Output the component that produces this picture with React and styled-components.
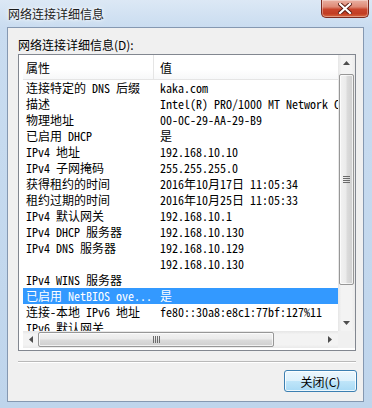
import React from 'react';
import styled, { createGlobalStyle } from 'styled-components';

const Global = createGlobalStyle`
  html, body { margin: 0; padding: 0; background: #fff; }
  body { width: 372px; height: 408px; overflow: hidden; }
`;

const MONO = `"Noto Sans Mono CJK SC", "Liberation Mono", "Noto Sans CJK SC", monospace`;
const UI = `"Noto Sans CJK SC", "Noto Sans", sans-serif`;

const Window = styled.div`
  width: 372px;
  height: 408px;
  box-sizing: border-box;
  background: linear-gradient(180deg, #dce8f5 0px, #c9dcf0 28px, #bfd5ec 100%);
  display: flex;
  flex-direction: column;
  padding: 0 8px 6px 7px;
  font-family: ${UI};
`;

const TitleBar = styled.div`
  height: 27px;
  margin: 0 -8px 0 -7px;
  padding: 0 3px 0 8px;
  display: flex;
  align-items: flex-start;
`;

const Title = styled.div`
  font-size: 12px;
  line-height: 27px;
  color: #1b1b1b;
  text-shadow: 0 0 6px #fff, 0 0 3px #fff;
`;

const CloseBtn = styled.div`
  margin-left: auto;
  width: 48px;
  height: 18px;
  box-sizing: border-box;
  border: 1px solid #7d2a1e;
  border-top: none;
  border-radius: 0 0 5px 5px;
  background: linear-gradient(180deg, #eab0a2 0%, #de8a76 40%, #c9452c 55%, #c23d23 80%, #d8673f 100%);
  box-shadow: inset 0 0 0 1px rgba(255,255,255,0.35);
  display: flex;
  align-items: center;
  justify-content: center;
`;

const Client = styled.div`
  flex: 1;
  background: #f0f0f0;
  border: 1px solid #8598b1;
  display: flex;
  flex-direction: column;
  padding: 0 7px 0 10px;
`;

const Label = styled.div`
  font-size: 12px;
  line-height: 16px;
  margin-top: 9px;
  margin-bottom: 1px;
  color: #000;
`;

const ListBox = styled.div`
  width: 338px;
  height: 297px;
  box-sizing: border-box;
  border: 1px solid #828790;
  background: #fff;
  padding: 0 0 2px 4px;
  display: grid;
  grid-template-columns: 315px 17px;
  grid-template-rows: 276px 17px;
`;

const ListArea = styled.div`
  overflow: hidden;
  font-family: ${MONO};
  font-size: 12px;
`;

const Header = styled.div`
  height: 25px;
  box-sizing: border-box;
  border-bottom: 1px solid #e5e5e5;
  display: flex;
  align-items: center;
  background: linear-gradient(180deg, #ffffff 0%, #ffffff 60%, #f7f8f9 100%);
`;

const HeadCell = styled.div`
  box-sizing: border-box;
  height: 100%;
  display: flex;
  align-items: center;
  padding-left: ${p => (p.$first ? 3 : 6)}px;
  width: ${p => (p.$first ? '131px' : 'auto')};
  border-right: ${p => (p.$first ? '1px solid #e5e5e5' : 'none')};
  color: #000;
`;

const Row = styled.div`
  height: 16px;
  display: flex;
  align-items: center;
  white-space: nowrap;
  background: ${p => (p.$sel ? '#3399ff' : 'transparent')};
  color: ${p => (p.$sel ? '#fff' : '#000')};
`;

const Cell = styled.div`
  box-sizing: border-box;
  overflow: hidden;
  white-space: nowrap;
  line-height: 16px;
  padding-left: ${p => (p.$first ? 3 : 6)}px;
  width: ${p => (p.$first ? '131px' : 'auto')};
  flex: ${p => (p.$first ? '0 0 auto' : '1 1 auto')};
`;

const VScroll = styled.div`
  grid-column: 2;
  grid-row: 1;
  background: linear-gradient(90deg, #e6e6e6 0%, #f3f3f3 20%, #f3f3f3 80%, #eaeaea 100%);
  display: flex;
  flex-direction: column;
  align-items: center;
`;

const HScroll = styled.div`
  grid-column: 1;
  grid-row: 2;
  background: linear-gradient(180deg, #e6e6e6 0%, #f3f3f3 20%, #f3f3f3 80%, #eaeaea 100%);
  display: flex;
  align-items: center;
`;

const Corner = styled.div`
  grid-column: 2;
  grid-row: 2;
  background: #f0f0f0;
`;

const ArrowBox = styled.div`
  width: ${p => (p.$h ? '16px' : '17px')};
  height: ${p => (p.$h ? '17px' : '16px')};
  flex: 0 0 auto;
  display: flex;
  align-items: center;
  justify-content: center;
`;

const VThumb = styled.div`
  margin-top: 3px;
  width: 15px;
  height: 211px;
  box-sizing: border-box;
  border: 1px solid #979797;
  border-radius: 2px;
  background: linear-gradient(90deg, #f2f2f2 0%, #ebebeb 45%, #dbdbdb 55%, #cfcfcf 100%);
  box-shadow: inset 0 0 0 1px rgba(255,255,255,0.7);
  display: flex;
  align-items: center;
  justify-content: center;
`;

const HThumb = styled.div`
  margin-left: -1px;
  width: 236px;
  height: 15px;
  box-sizing: border-box;
  border: 1px solid #979797;
  border-radius: 2px;
  background: linear-gradient(180deg, #f2f2f2 0%, #ebebeb 45%, #dbdbdb 55%, #cfcfcf 100%);
  box-shadow: inset 0 0 0 1px rgba(255,255,255,0.7);
  display: flex;
  align-items: center;
  justify-content: center;
`;

const Spacer = styled.div`
  flex: 1;
`;

const Separator = styled.div`
  width: 338px;
  margin-top: 10px;
  border-top: 1px solid #b9b9b9;
  border-bottom: 1px solid #ffffff;
`;

const ButtonRow = styled.div`
  display: flex;
  justify-content: flex-end;
  margin-top: 7px;
  width: 339px;
`;

const Button = styled.div`
  width: 73px;
  height: 22px;
  box-sizing: border-box;
  border: 1px solid #3c7fb1;
  border-radius: 3px;
  background: linear-gradient(180deg, #ecf7fd 0%, #ddf1fc 48%, #bfe5f9 52%, #a9daf5 100%);
  box-shadow: inset 0 0 0 1px rgba(255,255,255,0.8);
  display: flex;
  align-items: center;
  justify-content: center;
  font-size: 12px;
  color: #000;
`;

const rows = [
  ['连接特定的 DNS 后缀', 'kaka.com'],
  ['描述', 'Intel(R) PRO/1000 MT Network Connection'],
  ['物理地址', '00-0C-29-AA-29-B9'],
  ['已启用 DHCP', '是'],
  ['IPv4 地址', '192.168.10.10'],
  ['IPv4 子网掩码', '255.255.255.0'],
  ['获得租约的时间', '2016年10月17日 11:05:34'],
  ['租约过期的时间', '2016年10月25日 11:05:33'],
  ['IPv4 默认网关', '192.168.10.1'],
  ['IPv4 DHCP 服务器', '192.168.10.130'],
  ['IPv4 DNS 服务器', '192.168.10.129'],
  ['', '192.168.10.130'],
  ['IPv4 WINS 服务器', ''],
  ['已启用 NetBIOS ove...', '是', true],
  ['连接-本地 IPv6 地址', 'fe80::30a8:e8c1:77bf:127%11'],
  ['IPv6 默认网关', ''],
];

const Tri = ({ dir }) => {
  const pts = {
    up: '0,4 3.5,0 7,4',
    down: '0,0 3.5,4 7,0',
    left: '4,0 0,3.5 4,7',
    right: '0,0 4,3.5 0,7',
  }[dir];
  const vert = dir === 'up' || dir === 'down';
  return (
    <svg width={vert ? 7 : 4} height={vert ? 4 : 7} viewBox={vert ? '0 0 7 4' : '0 0 4 7'}>
      <polygon points={pts} fill="#4d4d4d" />
    </svg>
  );
};

const VGrip = () => (
  <svg width="7" height="7" viewBox="0 0 7 7">
    {[0.5, 2.5, 4.5, 6.5].map(y => (
      <line key={y} x1="0" x2="7" y1={y} y2={y} stroke="#6b6b6b" strokeWidth="1" />
    ))}
  </svg>
);

const HGrip = () => (
  <svg width="7" height="7" viewBox="0 0 7 7">
    {[0.5, 2.5, 4.5, 6.5].map(x => (
      <line key={x} y1="0" y2="7" x1={x} x2={x} stroke="#6b6b6b" strokeWidth="1" />
    ))}
  </svg>
);

const CloseX = () => (
  <svg width="14" height="11" viewBox="0 0 14 11">
    <path d="M2 1 L12 10 M12 1 L2 10" stroke="#5a1a10" strokeWidth="4" strokeLinecap="square" />
    <path d="M2 1 L12 10 M12 1 L2 10" stroke="#ffffff" strokeWidth="2.2" strokeLinecap="square" />
  </svg>
);

export default function App() {
  return (
    <>
      <Global />
      <Window>
        <TitleBar>
          <Title>网络连接详细信息</Title>
          <CloseBtn><CloseX /></CloseBtn>
        </TitleBar>
        <Client>
          <Label>网络连接详细信息(D):</Label>
          <ListBox>
            <ListArea>
              <Header>
                <HeadCell $first>属性</HeadCell>
                <HeadCell>值</HeadCell>
              </Header>
              {rows.map(([a, b, sel], i) => (
                <Row key={i} $sel={sel}>
                  <Cell $first>{a}</Cell>
                  <Cell>{b}</Cell>
                </Row>
              ))}
            </ListArea>
            <VScroll>
              <ArrowBox><Tri dir="up" /></ArrowBox>
              <VThumb><VGrip /></VThumb>
              <Spacer />
              <ArrowBox><Tri dir="down" /></ArrowBox>
            </VScroll>
            <HScroll>
              <ArrowBox $h><Tri dir="left" /></ArrowBox>
              <HThumb><HGrip /></HThumb>
              <Spacer />
              <ArrowBox $h><Tri dir="right" /></ArrowBox>
            </HScroll>
            <Corner />
          </ListBox>
          <Separator />
          <ButtonRow>
            <Button>关闭(C)</Button>
          </ButtonRow>
        </Client>
      </Window>
    </>
  );
}
